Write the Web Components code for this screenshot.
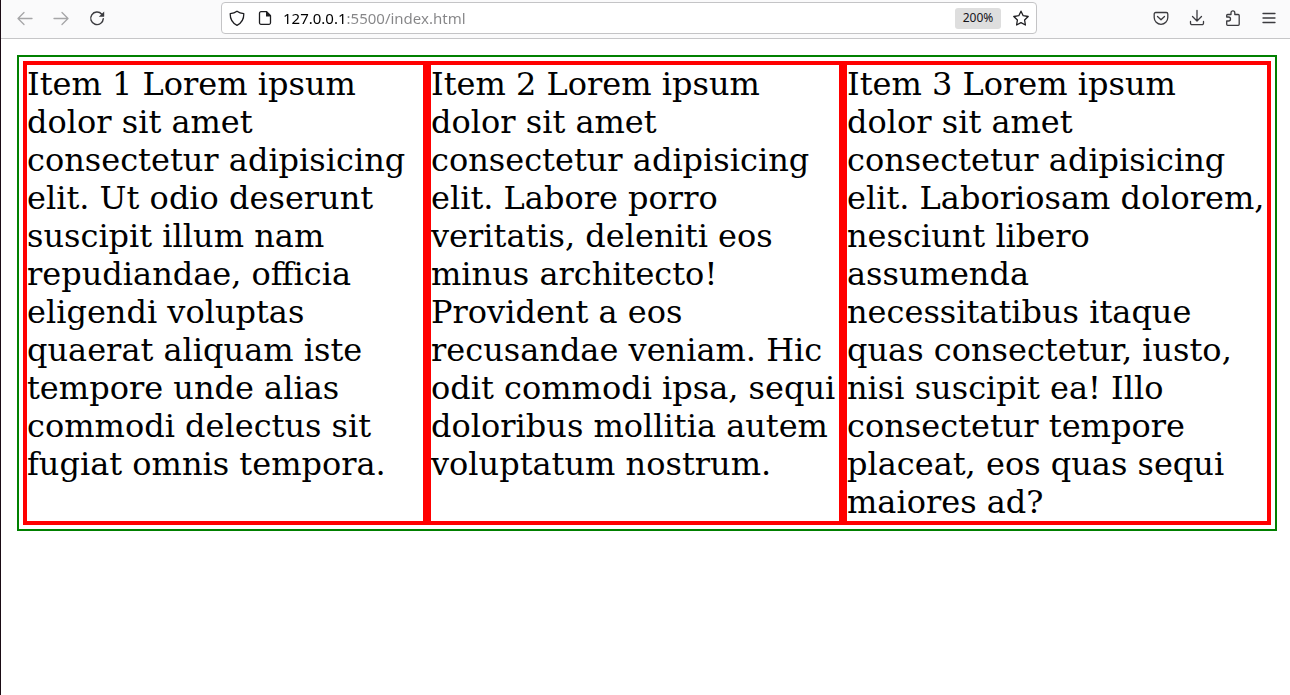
<!DOCTYPE html>
<html lang="en">
<head>
<meta charset="utf-8">
<title>Flex items</title>
<style>
  html { height: 100%; }
  body { margin: 0; min-height: 100%; box-sizing: border-box; border-left: 1px solid #1a0b14; background: #fff; color: #000; font-family: "DejaVu Serif", serif; }
</style>
</head>
<body>
<browser-bar></browser-bar>
<flex-box>
  <flex-item>Item 1 Lorem ipsum dolor sit amet consectetur adipisicing elit. Ut odio deserunt suscipit illum nam repudiandae, officia eligendi voluptas quaerat aliquam iste tempore unde alias commodi delectus sit fugiat omnis tempora.</flex-item>
  <flex-item>Item 2 Lorem ipsum dolor sit amet consectetur adipisicing elit. Labore porro veritatis, deleniti eos minus architecto! Provident a eos recusandae veniam. Hic odit commodi ipsa, sequi doloribus mollitia autem voluptatum nostrum.</flex-item>
  <flex-item>Item 3 Lorem ipsum dolor sit amet consectetur adipisicing elit. Laboriosam dolorem, nesciunt libero assumenda necessitatibus itaque quas consectetur, iusto, nisi suscipit ea! Illo consectetur tempore placeat, eos quas sequi maiores ad?</flex-item>
</flex-box>
<script>
const ICONS = {
  back: '<path d="M15 8.5H1.5M7 2.5l-6 6 6 6"/>',
  forward: '<path d="M1 8.5h13.5M9 2.5l6 6-6 6"/>',
  reload: '<path stroke-width="1.4" d="M12.8 4.2A6.300 6.300 0 1 0 14.3 8.6"/><path fill="currentColor" stroke="none" d="M15.2 1.500v4.700a.6.6 0 0 1-.6.6H9.800z"/>',
  shield: '<path d="M8 1.2c2 1.6 4.3 2.3 6.8 2.5.1 5-1.7 9-6.8 11.6C2.9 12.7 1.1 8.7 1.2 3.7 3.7 3.5 6 2.8 8 1.200z"/>',
  page: '<path d="M9.5 1.700H4A1.500 1.500 0 0 0 2.500 3.200v9.600A1.500 1.500 0 0 0 4 14.300h8a1.500 1.500 0 0 0 1.500-1.500V5.700z"/><path fill="currentColor" stroke="none" d="M9 1.200h.8L14 5.400v1H9z"/>',
  star: '<path d="M8 1.2l2.2 4.5 5 .8-3.600 3.500.8 5L8 12.700 3.600 15l.8-5L.8 6.500l5-.8z"/>',
  pocket: '<path d="M2.7 2.500h10.600a1.500 1.500 0 0 1 1.500 1.500v3.500a6.800 6.800 0 0 1-13.600 0V4a1.500 1.500 0 0 1 1.500-1.500z"/><path d="M4.500 6.500L8 9.800l3.500-3.300"/>',
  download: '<path d="M8 .5v10M3.500 6.500L8 11l4.500-4.500M1.500 11.500v1.700a1.500 1.500 0 0 0 1.500 1.500h10a1.500 1.500 0 0 0 1.500-1.500v-1.700"/>',
  puzzle: '<path d="M1.700 14.300V11h1.800a2 2 0 0 0 0-4H1.700V5.500a1 1 0 0 1 1-1H6V2.700a1.900 1.900 0 0 1 3.800 0v1.800h3.400a1 1 0 0 1 1 1v8.800a1 1 0 0 1-1 1H2.700a1 1 0 0 1-1-1z"/>',
  menu: '<path d="M2 3.500h12M2 8h12M2 12.500h12"/>'
};

customElements.define('bar-icon', class extends HTMLElement {
  constructor() {
    super();
    this.attachShadow({ mode: 'open' }).innerHTML = `
      <style>
        :host { display: block; width: 16px; height: 16px; }
        svg { display: block; width: 16px; height: 16px; overflow: visible; fill: none; stroke: currentColor; stroke-width: 1.3; stroke-linecap: round; stroke-linejoin: round; }
      </style>
      <svg viewBox="0 0 16 16" aria-hidden="true">${ICONS[this.getAttribute('name')]}</svg>`;
  }
});

customElements.define('bar-button', class extends HTMLElement {
  constructor() {
    super();
    this.attachShadow({ mode: 'open' }).innerHTML = `
      <style>
        :host { display: block; flex: none; color: #3b3b3f; }
        :host([off]) { color: #a6a6a8; }
        :host([narrow]) { color: #1d1d20; }
        button { display: flex; align-items: center; justify-content: center; width: 36px; height: 30px; margin: 0; padding: 0; border: 0; background: none; color: inherit; }
        :host([narrow]) button { width: 28px; }
      </style>
      <button type="button" aria-label="${this.getAttribute('label')}" ${this.hasAttribute('off') ? 'disabled' : ''}><bar-icon name="${this.getAttribute('icon')}"></bar-icon></button>`;
  }
});

customElements.define('address-box', class extends HTMLElement {
  constructor() {
    super();
    this.attachShadow({ mode: 'open' }).innerHTML = `
      <style>
        :host { display: flex; align-items: center; box-sizing: border-box; height: 32px; padding: 0 1px; border: 1px solid #c4c4c6; border-radius: 4px; background: #fff; }
        input { flex: 1; min-width: 0; height: 24px; margin: 0; padding: 0 0 0 4px; border: 0; outline: 0; font: 15px/24px "Noto Sans", sans-serif; color: #000;
          -webkit-text-fill-color: transparent;
          background: linear-gradient(90deg, #000 68px, #858587 68px); -webkit-background-clip: text; background-clip: text; }
        .zoom { flex: none; width: 46px; height: 21px; margin: 0 6px 0 0; padding: 0; border: 0; border-radius: 3px; background: #dedede; color: #15141a; font: 12px/20px "Noto Sans", sans-serif; }
      </style>
      <bar-button narrow icon="shield" label="Tracking protection"></bar-button>
      <bar-button narrow icon="page" label="Site information"></bar-button>
      <input type="text" aria-label="Address" value="127.0.0.1:5500/index.html">
      <button class="zoom" type="button">200%</button>
      <bar-button narrow icon="star" label="Bookmark this page"></bar-button>`;
  }
});

customElements.define('browser-bar', class extends HTMLElement {
  constructor() {
    super();
    this.attachShadow({ mode: 'open' }).innerHTML = `
      <style>
        :host { display: block; }
        nav { display: flex; align-items: center; box-sizing: border-box; height: 39px; padding: 0 3px 2px 6px; border-bottom: 1px solid #c6c6c8; background: #fafafb; }
        .group { display: flex; flex: none; }
        .middle { flex: 1; min-width: 0; display: grid; grid-template-columns: 53fr 408fr 53fr; }
        address-box { grid-column: 2; min-width: 0; }
      </style>
      <nav aria-label="Browser toolbar">
        <div class="group">
          <bar-button off icon="back" label="Back"></bar-button>
          <bar-button off icon="forward" label="Forward"></bar-button>
          <bar-button icon="reload" label="Reload"></bar-button>
        </div>
        <div class="middle"><address-box></address-box></div>
        <div class="group">
          <bar-button icon="pocket" label="Save to Pocket"></bar-button>
          <bar-button icon="download" label="Downloads"></bar-button>
          <bar-button icon="puzzle" label="Extensions"></bar-button>
          <bar-button icon="menu" label="Menu"></bar-button>
        </div>
      </nav>`;
  }
});

customElements.define('flex-box', class extends HTMLElement {
  constructor() {
    super();
    this.attachShadow({ mode: 'open' }).innerHTML = `
      <style>
        :host { display: grid; grid-template-columns: 101fr 104fr 107fr; margin: 16px 13px 16px 16px; padding: 4px; border: 2px solid green; }
      </style>
      <slot></slot>`;
  }
});

customElements.define('flex-item', class extends HTMLElement {
  constructor() {
    super();
    this.attachShadow({ mode: 'open' }).innerHTML = `
      <style>
        :host { display: block; min-width: 0; border: 4px solid red; font-size: 32px; line-height: 38px; }
      </style>
      <slot></slot>`;
  }
});
</script>
</body>
</html>
